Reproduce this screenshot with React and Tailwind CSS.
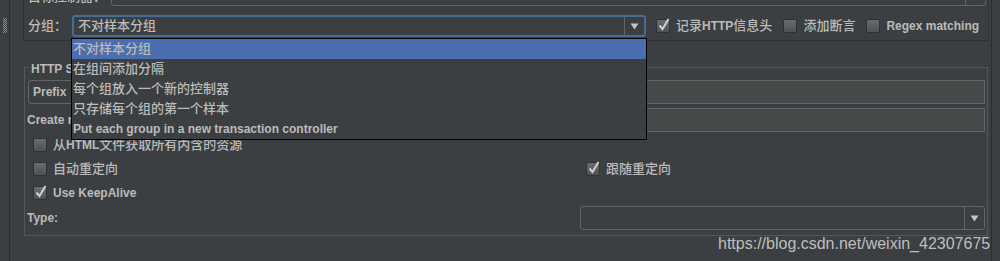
import React from "react";

const font = "font-['Liberation_Sans','Noto_Sans_CJK_SC',sans-serif]";

// latin runs are set a bit smaller and heavier than the CJK runs, like the Swing look
function Txt({ children }) {
  const parts = String(children).split(/([\x20-\x7E]+)/).filter(Boolean);
  return (
    <>
      {parts.map((p, i) =>
        /^[\x20-\x7E]+$/.test(p) ? (
          <span key={i} className="text-[12px] font-bold">{p}</span>
        ) : (
          <span key={i} className="font-medium">{p}</span>
        )
      )}
    </>
  );
}

function Arrow() {
  return (
    <svg width="9" height="7" viewBox="0 0 9 7">
      <path d="M0.5 0.5 L8.5 0.5 L4.5 6.5 Z" fill="#c4c4c4" />
    </svg>
  );
}

function Combo({ text, className = "", focused = false }) {
  return (
    <div
      className={
        "h-full flex items-stretch rounded-[3px] bg-[#3c3f41] " +
        (focused ? "border-2 border-[#466d94] " : "border border-[#646464] ") +
        className
      }
    >
      <div className="flex-1 flex items-center pl-[4px] overflow-hidden whitespace-nowrap">
        <Txt>{text}</Txt>
      </div>
      <div className="w-[20px] border-l border-[#646464] flex items-center justify-center">
        <Arrow />
      </div>
    </div>
  );
}

function Field({ className = "" }) {
  return <div className={"h-full bg-[#45494a] border border-[#646464] " + className} />;
}

function Check({ checked, label }) {
  return (
    <div className="flex items-center gap-[6px] whitespace-nowrap">
      <span className="relative w-[14px] h-[14px] rounded-[2px] border border-[#2f3133] bg-linear-to-b from-[#6a6d70] to-[#4f5254] shrink-0">
        {checked && (
          <svg className="absolute left-[0px] top-[-3px]" width="14" height="15" viewBox="0 0 14 15">
            <path d="M2.5 8.5 L5.5 12 L11.5 2" fill="none" stroke="#cfcfcf" strokeWidth="2" />
          </svg>
        )}
      </span>
      <span>
        <Txt>{label}</Txt>
      </span>
    </div>
  );
}

const items = [
  "不对样本分组",
  "在组间添加分隔",
  "每个组放入一个新的控制器",
  "只存储每个组的第一个样本",
  "Put each group in a new transaction controller",
];

export default function App() {
  return (
    <div className={"relative w-[1000px] h-[261px] overflow-hidden bg-[#3c3f41] text-[#bbbbbb] text-[13px] flex " + font}>
      {/* left gripper strip */}
      <div className="w-[10px] shrink-0 border-r border-[#2b2d2e] pt-[18px] pl-[3px]">
        <svg width="4" height="15" viewBox="0 0 4 15">
          {Array.from({ length: 8 }).map((_, i) => (
            <g key={i}>
              <rect x="0" y={i * 2} width="1" height="1" fill="#8a8d8f" />
              <rect x="2" y={i * 2} width="1" height="1" fill="#8a8d8f" />
              <rect x="1" y={i * 2 + 1} width="1" height="1" fill="#8a8d8f" />
              <rect x="3" y={i * 2 + 1} width="1" height="1" fill="#8a8d8f" />
            </g>
          ))}
        </svg>
      </div>
      <div className="w-[13px] shrink-0" />

      {/* main column */}
      <div className="w-[966px] shrink-0 flex flex-col">
        {/* recorder grouping panel */}
        <div className="h-[41px] border-l border-r border-b border-[#2f3234] pl-[4px] pr-[2px]">
          <div className="h-[24px] mt-[-18px] flex items-center">
            <span className="w-[83px] shrink-0 pt-[5px]">
              <Txt>目标控制器：</Txt>
            </span>
            <Combo className="flex-1" text="" />
          </div>
          <div className="h-[22px] mt-[9px] flex items-center">
            <span className="w-[44px] shrink-0">
              <Txt>分组：</Txt>
            </span>
            <Combo className="w-[574px] shrink-0" text="不对样本分组" focused />
            <div className="ml-[10px] flex items-center gap-[11px]">
              <Check checked label="记录HTTP信息头" />
              <Check label="添加断言" />
              <Check label="Regex matching" />
            </div>
          </div>
        </div>

        {/* HTTP sampler settings group */}
        <div className="relative mt-[26px] ml-[1px] w-[964px] h-[169px] border border-[#555859] pl-[3px] pr-[2px] pt-[12px]">
          <span className="absolute left-[4px] top-[-9px] px-[2px] bg-[#3c3f41]">
            <Txt>HTTP Sampler settings</Txt>
          </span>
          <div className="h-[24px] flex items-center gap-[6px]">
            <Combo className="w-[150px] shrink-0" text="Prefix" />
            <Field className="flex-1" />
          </div>
          <div className="h-[24px] mt-[4px] flex items-center">
            <span className="w-[300px] shrink-0 -ml-[1px]">
              <Txt>Create new transaction after request (ms):</Txt>
            </span>
            <Field className="flex-1" />
          </div>
          <div className="h-[24px] mt-[1px] pl-[5px] flex items-center">
            <Check label="从HTML文件获取所有内含的资源" />
          </div>
          <div className="h-[24px] pl-[5px] flex items-center">
            <div className="w-[553px] shrink-0">
              <Check label="自动重定向" />
            </div>
            <Check checked label="跟随重定向" />
          </div>
          <div className="h-[24px] pl-[5px] flex items-center">
            <Check checked label="Use KeepAlive" />
          </div>
          <div className="h-[24px] mt-[1px] flex items-center">
            <span className="w-[553px] shrink-0 -ml-[1px]">
              <Txt>Type:</Txt>
            </span>
            <Combo className="flex-1" text="" />
          </div>
        </div>
      </div>

      {/* right edge */}
      <div className="flex-1 ml-[2px] border-l border-[#2b2d2e]" />

      {/* grouping dropdown popup */}
      <div className="absolute left-[71px] top-[38px] w-[576px] h-[102px] border border-black bg-[#3c3f41]">
        {items.map((t, i) => (
          <div
            key={t}
            className={"h-[20px] pl-[1px] flex items-center whitespace-nowrap " + (i === 0 ? "bg-[#4b6eaf]" : "")}
          >
            <Txt>{t}</Txt>
          </div>
        ))}
      </div>

      {/* watermark */}
      <span className="absolute left-[718px] top-[232px] text-[16px] text-[#cfcfcf]/90 font-['Liberation_Sans',sans-serif]">
        https://blog.csdn.net/weixin_42307675
      </span>
    </div>
  );
}
